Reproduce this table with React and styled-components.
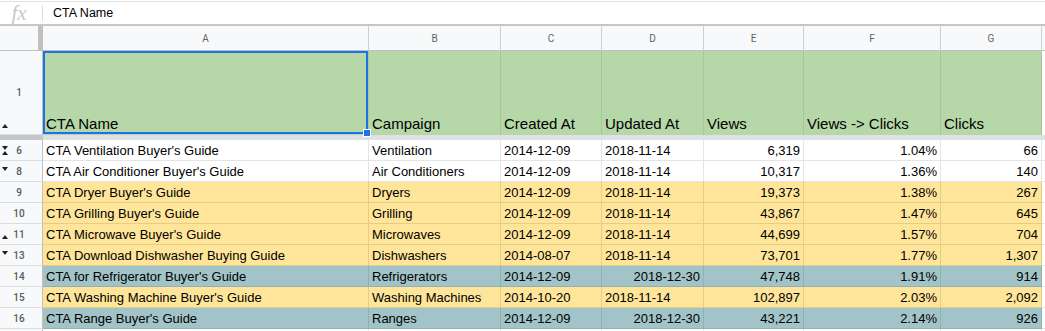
import React from 'react'
import styled, { createGlobalStyle } from 'styled-components'

// column widths, including the 1px right gridline
const widths = [43, 326, 132, 101, 102, 100, 137, 101, 100]
const template = widths.map((w) => w + 'px').join(' ')

const fills = {
  white: '#ffffff',
  yellow: '#ffe599',
  teal: '#a2c4c9',
  green: '#b6d7a8',
}

const letters = ['A', 'B', 'C', 'D', 'E', 'F', 'G', '']
const headers = ['CTA Name', 'Campaign', 'Created At', 'Updated At', 'Views', 'Views -> Clicks', 'Clicks', '']

// [row number, markers, fill, cells, right-aligned updated date?]
const rows = [
  ['6', 'both', 'white', ["CTA Ventilation Buyer's Guide", 'Ventilation', '2014-12-09', '2018-11-14', '6,319', '1.04%', '66']],
  ['8', 'down', 'white', ["CTA Air Conditioner Buyer's Guide", 'Air Conditioners', '2014-12-09', '2018-11-14', '10,317', '1.36%', '140']],
  ['9', '', 'yellow', ["CTA Dryer Buyer's Guide", 'Dryers', '2014-12-09', '2018-11-14', '19,373', '1.38%', '267']],
  ['10', '', 'yellow', ["CTA Grilling Buyer's Guide", 'Grilling', '2014-12-09', '2018-11-14', '43,867', '1.47%', '645']],
  ['11', 'up', 'yellow', ["CTA Microwave Buyer's Guide", 'Microwaves', '2014-12-09', '2018-11-14', '44,699', '1.57%', '704']],
  ['13', 'down', 'yellow', ['CTA Download Dishwasher Buying Guide', 'Dishwashers', '2014-08-07', '2018-11-14', '73,701', '1.77%', '1,307']],
  ['14', '', 'teal', ["CTA for Refrigerator Buyer's Guide", 'Refrigerators', '2014-12-09', '2018-12-30', '47,748', '1.91%', '914'], true],
  ['15', '', 'yellow', ["CTA Washing Machine Buyer's Guide", 'Washing Machines', '2014-10-20', '2018-11-14', '102,897', '2.03%', '2,092']],
  ['16', '', 'teal', ["CTA Range Buyer's Guide", 'Ranges', '2014-12-09', '2018-12-30', '43,221', '2.14%', '926'], true],
  ['', '', 'white', ['', '', '', '', '', '', '']],
]

const GlobalStyle = createGlobalStyle`
  html, body {
    margin: 0;
    padding: 0;
    background: #ffffff;
    overflow: hidden;
  }
  body {
    font-family: "Liberation Sans", Arial, sans-serif;
  }
`

const Sheet = styled.div`
  padding-top: 1px;
  height: 331px;
  overflow: hidden;
  box-sizing: border-box;
`

const FormulaBar = styled.div`
  display: flex;
  align-items: center;
  height: 25px;
  box-sizing: border-box;
  border-top: 1px solid #e1e1e1;
  border-bottom: 2px solid #c7c7c7;
`

const FxLabel = styled.div`
  width: 38px;
  margin-right: 4px;
  text-align: center;
  font: italic 21px "Liberation Serif", serif;
  color: #c8c8c8;
  line-height: 20px;
`

const FormulaDivider = styled.div`
  width: 1px;
  height: 16px;
  background: #dadce0;
`

const FormulaText = styled.div`
  padding-left: 10px;
  font-size: 12.5px;
  color: #000;
`

const Row = styled.div`
  display: grid;
  grid-template-columns: ${template};
  height: ${(p) => p.$h}px;
`

const Corner = styled.div`
  background: #f8f9fa;
  border-right: 5px solid #c0c0c0;
  border-bottom: 1px solid #c0c0c0;
`

const ColLetter = styled.div`
  display: flex;
  align-items: center;
  justify-content: center;
  background: #f8f9fa;
  border-right: 1px solid #d0d0d0;
  border-bottom: 1px solid #c0c0c0;
  font: 10px Roboto, "Liberation Sans", sans-serif;
  color: #5f6368;
`

const RowHead = styled.div`
  display: grid;
  grid-template-columns: 7px 1fr 7px;
  align-items: center;
  padding: 0 6px 0 2px;
  background: #f8f9fa;
  border-right: 1px solid #c0c0c0;
  border-bottom: 1px solid #dadce0;
  font: 500 10px Roboto, "Liberation Sans", sans-serif;
  color: #555a5f;
  text-align: center;
`

const Markers = styled.div`
  align-self: stretch;
  display: flex;
  flex-direction: column;
  justify-content: ${(p) => (p.$end ? 'flex-end' : 'center')};
  padding-bottom: ${(p) => (p.$end ? 6 : 0)}px;
`

const MarkSlot = styled.div`
  height: 5px;
  display: flex;
  align-items: flex-end;
`

const Triangle = styled.span`
  width: 0;
  height: 0;
  border-left: 3px solid transparent;
  border-right: 3px solid transparent;
  ${(p) =>
    p.$up ? 'border-bottom: 4px solid #202124;' : 'border-top: 4px solid #202124;'}
`

const HeaderCell = styled.div`
  position: relative;
  display: flex;
  align-items: flex-end;
  padding: 0 3px 3px;
  background: ${fills.green};
  border-right: 1px solid rgba(0, 0, 0, 0.08);
  font-size: 15px;
  line-height: 17px;
  color: #000;
  white-space: nowrap;
  overflow: ${(p) => (p.$selected ? 'visible' : 'hidden')};
  ${(p) => p.$blank && 'background: #ffffff;'}
`

const Selection = styled.div`
  position: absolute;
  top: 0;
  left: 0;
  right: 0;
  bottom: 1px;
  border: 2px solid #1a73e8;
  pointer-events: none;
  z-index: 2;
`

const Handle = styled.div`
  position: absolute;
  right: -5px;
  bottom: -5px;
  width: 6px;
  height: 6px;
  background: #1a73e8;
  border: 1px solid #ffffff;
`

const FreezeBand = styled.div`
  display: grid;
  grid-template-columns: 43px 1fr;
  height: 5px;
`

const BandHead = styled.div`
  background: #c4c6c8;
`

const BandRest = styled.div`
  background: #dde1e6;
`

const Cell = styled.div`
  height: 21px;
  box-sizing: border-box;
  padding: 1px 3px 0;
  background: ${(p) => fills[p.$fill]};
  border-right: 1px solid rgba(0, 0, 0, 0.1);
  border-bottom: 1px solid rgba(0, 0, 0, 0.1);
  font-size: 13px;
  line-height: 20px;
  color: #000;
  text-align: ${(p) => (p.$right ? 'right' : 'left')};
  white-space: nowrap;
  overflow: hidden;
`

const Marks = ({ kind, end }) => (
  <Markers $end={end}>
    <MarkSlot>{(kind === 'down' || kind === 'both') && <Triangle />}</MarkSlot>
    <MarkSlot>{(kind === 'up' || kind === 'both') && <Triangle $up />}</MarkSlot>
  </Markers>
)

const App = () => {
  return (
    <>
      <GlobalStyle />
      <Sheet>
        <FormulaBar>
          <FxLabel>fx</FxLabel>
          <FormulaDivider />
          <FormulaText>CTA Name</FormulaText>
        </FormulaBar>

        <Row $h={25}>
          <Corner />
          {letters.map((l, i) => (
            <ColLetter key={i}>{l}</ColLetter>
          ))}
        </Row>

        <Row $h={84}>
          <RowHead>
            <Marks kind="up" end />
            <span>1</span>
            <span />
          </RowHead>
          {headers.map((h, i) => (
            <HeaderCell key={i} $selected={i === 0} $blank={i === 7}>
              <span>{h}</span>
              {i === 0 && (
                <Selection>
                  <Handle />
                </Selection>
              )}
            </HeaderCell>
          ))}
        </Row>

        <FreezeBand>
          <BandHead />
          <BandRest />
        </FreezeBand>

        {rows.map(([num, mark, fill, cells, dateRight], r) => (
          <Row $h={21} key={r}>
            <RowHead>
              <Marks kind={mark} />
              <span>{num}</span>
              <span />
            </RowHead>
            {cells.map((c, i) => (
              <Cell key={i} $fill={fill} $right={i >= 4 || (i === 3 && dateRight)}>
                {c}
              </Cell>
            ))}
            <Cell $fill="white" />
          </Row>
        ))}
      </Sheet>
    </>
  )
}

export default App
